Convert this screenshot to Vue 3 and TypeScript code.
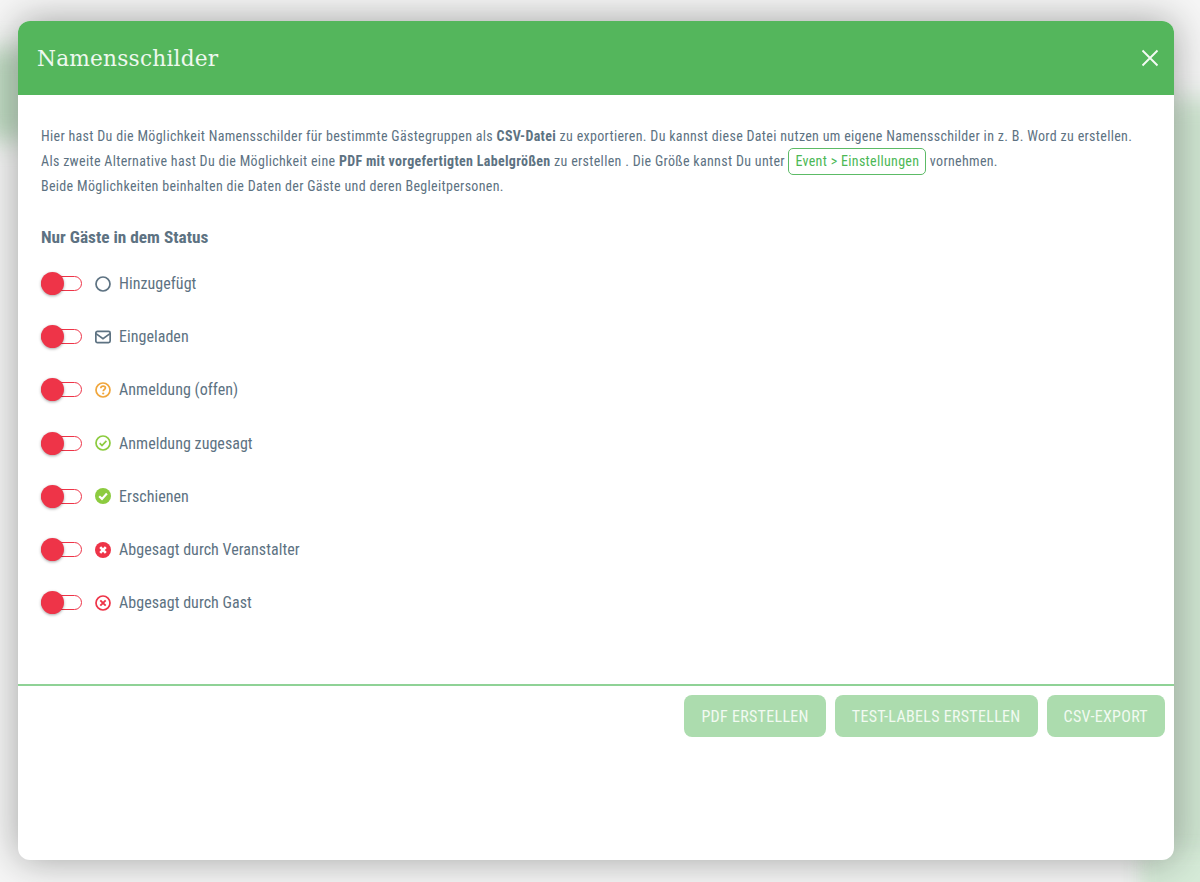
<script setup lang="ts">
interface Status { label: string; icon: string }
const statuses: Status[] = [
  { label: 'Hinzugefügt', icon: 'circle' },
  { label: 'Eingeladen', icon: 'mail' },
  { label: 'Anmeldung (offen)', icon: 'question' },
  { label: 'Anmeldung zugesagt', icon: 'check' },
  { label: 'Erschienen', icon: 'checkSolid' },
  { label: 'Abgesagt durch Veranstalter', icon: 'xSolid' },
  { label: 'Abgesagt durch Gast', icon: 'x' },
]
</script>

<template>
  <div class="page">
    <div class="backdrop">
      <div class="glow glow-left"></div>
      <div class="glow glow-right"></div>
      <div class="glow glow-bottom"></div>
    </div>
    <section class="modal">
      <header class="head">
        <h1>Namensschilder</h1>
        <svg class="close" width="18" height="18" viewBox="0 0 18 18" aria-label="Schließen">
          <path d="M1.5 1.5 16.5 16.5M16.5 1.5 1.5 16.5" stroke="#f4fbf4" stroke-width="1.9" fill="none" />
        </svg>
      </header>
      <div class="body">
        <p class="intro">
          Hier hast Du die Möglichkeit Namensschilder für bestimmte Gästegruppen als <b>CSV-Datei</b> zu exportieren. Du kannst diese Datei nutzen um eigene Namensschilder in z. B. Word zu erstellen.<br />
          Als zweite Alternative hast Du die Möglichkeit eine <b>PDF mit vorgefertigten Labelgrößen</b> zu erstellen . Die Größe kannst Du unter <a class="pill">Event &gt; Einstellungen</a> vornehmen.<br />
          Beide Möglichkeiten beinhalten die Daten der Gäste und deren Begleitpersonen.
        </p>
        <h2>Nur Gäste in dem Status</h2>
        <ul class="list">
          <li v-for="s in statuses" :key="s.label">
            <span class="toggle"><span class="knob"></span></span>
            <svg class="icon" width="16" height="16" viewBox="0 0 16 16">
              <circle v-if="s.icon === 'circle'" cx="8" cy="8" r="7" fill="none" stroke="#5d7282" stroke-width="1.7" />
              <template v-else-if="s.icon === 'mail'">
                <rect x="0.85" y="2.35" width="14.3" height="11.3" rx="1.6" fill="none" stroke="#5d7282" stroke-width="1.7" />
                <path d="M1 4.6 8 9.6 15 4.6" fill="none" stroke="#5d7282" stroke-width="1.7" />
              </template>
              <template v-else-if="s.icon === 'question'">
                <circle cx="8" cy="8" r="7" fill="none" stroke="#f0a63c" stroke-width="1.7" />
                <path d="M5.8 6.2C5.9 4.9 7 4.2 8.1 4.2 9.4 4.2 10.4 5 10.4 6.1 10.4 7.5 8.2 7.6 8.2 9.3" fill="none" stroke="#f0a63c" stroke-width="1.7" />
                <circle cx="8.2" cy="11.5" r="1.1" fill="#f0a63c" />
              </template>
              <template v-else-if="s.icon === 'check'">
                <circle cx="8" cy="8" r="7" fill="none" stroke="#8ccb3f" stroke-width="1.7" />
                <path d="M4.7 8.2 7 10.5 11.4 5.9" fill="none" stroke="#8ccb3f" stroke-width="1.7" />
              </template>
              <template v-else-if="s.icon === 'checkSolid'">
                <circle cx="8" cy="8" r="8" fill="#8ccb3f" />
                <path d="M4.2 8.2 7 10.9 11.9 5.6" fill="none" stroke="#fff" stroke-width="2.2" />
              </template>
              <template v-else-if="s.icon === 'xSolid'">
                <circle cx="8" cy="8" r="8" fill="#ee3448" />
                <path d="M5.2 5.2 10.8 10.8M10.8 5.2 5.2 10.8" fill="none" stroke="#fff" stroke-width="2.6" />
              </template>
              <template v-else>
                <circle cx="8" cy="8" r="7" fill="none" stroke="#ee3448" stroke-width="1.7" />
                <path d="M5.3 5.3 10.7 10.7M10.7 5.3 5.3 10.7" fill="none" stroke="#ee3448" stroke-width="1.9" />
              </template>
            </svg>
            <span class="label">{{ s.label }}</span>
          </li>
        </ul>
      </div>
      <footer class="foot">
        <button type="button">PDF ERSTELLEN</button>
        <button type="button">TEST-LABELS ERSTELLEN</button>
        <button type="button">CSV-EXPORT</button>
      </footer>
    </section>
  </div>
</template>

<style>
html, body { margin: 0; padding: 0; }
</style>

<style scoped>
.page {
  position: relative;
  width: 1200px;
  height: 882px;
  overflow: hidden;
  box-sizing: border-box;
  padding: 21px 26px 22px 18px;
  background: #f6f6f6;
  font-family: "Roboto Condensed", Roboto, "Liberation Sans", sans-serif;
  font-stretch: 75%;
}
.backdrop { position: absolute; inset: 0; }
.glow { position: absolute; }
.glow-left { left: -15px; top: 48px; width: 45px; height: 92px; background: #bcd9bf; filter: blur(12px); }
.glow-right { left: 1160px; top: 98px; width: 70px; height: 800px; background: #cfe5d1; filter: blur(12px); }
.glow-bottom { left: 1140px; top: 850px; width: 90px; height: 60px; background: #d6ebd8; filter: blur(10px); }
.modal {
  position: relative;
  height: 839px;
  display: flex;
  flex-direction: column;
  background: #fff;
  border-radius: 12px;
  overflow: hidden;
  box-shadow: 0 0 38px rgba(20, 24, 20, 0.38);
}
.head {
  flex: none;
  height: 74px;
  display: flex;
  align-items: center;
  justify-content: space-between;
  padding: 0 15px 0 19px;
  background: #54b65c;
}
h1 {
  margin: 0;
  font-family: "DejaVu Serif", "Liberation Serif", serif;
  font-stretch: 100%;
  font-size: 21.7px;
  font-weight: 400;
  letter-spacing: 0.2px;
  color: #eef8ef;
}
.body { flex: none; height: 589px; box-sizing: border-box; padding: 28.6px 23px 0; }
.intro {
  margin: 0;
  font-size: 14px;
  line-height: 25px;
  letter-spacing: 0.315px;
  color: #5d7282;
}
.intro b { font-weight: 700; }
.pill {
  display: inline-block;
  margin: -2px 0;
  padding: 0 6px;
  line-height: 25px;
  border: 1px solid #5cbb66;
  border-radius: 5px;
  color: #4cb856;
}
h2 {
  margin: 26.4px 0 0;
  font-size: 17.3px;
  line-height: 24px;
  font-weight: 700;
  color: #5d7282;
}
.list { list-style: none; margin: 8px 0 0; padding: 0; }
.list li { height: 53.2px; display: flex; align-items: center; }
.toggle {
  position: relative;
  box-sizing: border-box;
  width: 41px;
  height: 15px;
  border: 1px solid #ee3448;
  border-radius: 8px;
  background: #fff;
}
.knob {
  position: absolute;
  left: -1px;
  top: -5px;
  width: 23px;
  height: 23px;
  border-radius: 50%;
  background: #ee3448;
  box-shadow: 0 1px 3px rgba(0, 0, 0, 0.35);
}
.icon { margin-left: 13px; flex: none; }
.label { margin-left: 8px; font-size: 16px; letter-spacing: 0.04px; color: #5d7282; }
.foot {
  flex: none;
  display: flex;
  justify-content: flex-end;
  gap: 9px;
  padding: 9px 9px 0 0;
  border-top: 2px solid #8fd296;
}
button {
  height: 42px;
  padding: 0 17px;
  border: 0;
  border-radius: 8px;
  background: #acdcae;
  color: #f2faf2;
  font: inherit;
  font-size: 16px;
  letter-spacing: 0.3px;
}
</style>
